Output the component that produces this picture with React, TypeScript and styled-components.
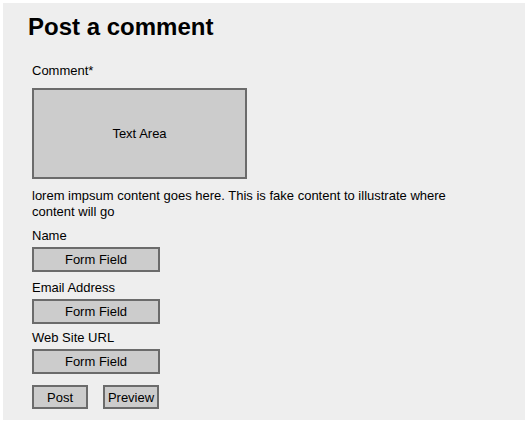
import { createGlobalStyle, styled } from "styled-components";

const GlobalStyle = createGlobalStyle`
    html, body {
        margin: 0;
        padding: 0;
        background: #ffffff;
    }

    body {
        font-family: "Liberation Sans", Arial, sans-serif;
        color: #000000;
    }
`;

type FieldProps = {
    label: string;
    spacing?: number;
}

const Field: React.FC<FieldProps> = ({ label, spacing = 8 }) => {
    return (
        <FieldGroup $spacing={spacing}>
            <Label>{label}</Label>
            <InputBox>Form Field</InputBox>
        </FieldGroup>
    );
}

const App: React.FC = () => {
    return (
        <>
            <GlobalStyle />
            <Panel>
                <Title>Post a comment</Title>

                <Form>
                    <Label>Comment*</Label>
                    <TextArea>Text Area</TextArea>
                    <Hint>
                        lorem impsum content goes here. This is fake content to illustrate where content will go
                    </Hint>

                    <Field label="Name" />
                    <Field label="Email Address" />
                    <Field label="Web Site URL" spacing={6} />

                    <Actions>
                        <Button>Post</Button>
                        <Button>Preview</Button>
                    </Actions>
                </Form>
            </Panel>
        </>
    );
}


const Panel = styled.div`
    margin: 3px;
    width: 522px;
    height: 417px;
    box-sizing: border-box;
    background: #eeeeee;
    padding-top: 10px;
`;

const Title = styled.h1`
    margin: 0;
    padding-left: 25px;
    font-size: 24px;
    line-height: 28px;
    font-weight: bold;
`;

const Form = styled.div`
    display: flex;
    flex-direction: column;
    align-items: flex-start;
    padding-left: 29px;
    margin-top: 22px;
`;

const Label = styled.div`
    font-size: 13px;
    line-height: 16px;
`;

const TextArea = styled.div`
    margin-top: 9px;
    width: 215px;
    height: 91px;
    box-sizing: border-box;
    border: 2px solid #6b6b6b;
    background: #cccccc;
    display: flex;
    align-items: center;
    justify-content: center;
    font-size: 13px;
`;

const Hint = styled.p`
    margin: 9px 0 0;
    max-width: 440px;
    font-size: 13px;
    line-height: 16px;
`;

const FieldGroup = styled.div<{ $spacing: number }>`
    display: flex;
    flex-direction: column;
    align-items: flex-start;
    gap: 3px;
    margin-top: ${({ $spacing }) => $spacing}px;
`;

const InputBox = styled.div`
    width: 128px;
    height: 25px;
    box-sizing: border-box;
    border: 2px solid #6b6b6b;
    background: #cccccc;
    display: flex;
    align-items: center;
    justify-content: center;
    font-size: 13px;
`;

const Actions = styled.div`
    display: flex;
    gap: 15px;
    margin-top: 11px;
`;

const Button = styled.div`
    width: 56px;
    height: 24px;
    box-sizing: border-box;
    border: 2px solid #6b6b6b;
    background: #cccccc;
    display: flex;
    align-items: center;
    justify-content: center;
    font-size: 13px;
`;


export default App;
